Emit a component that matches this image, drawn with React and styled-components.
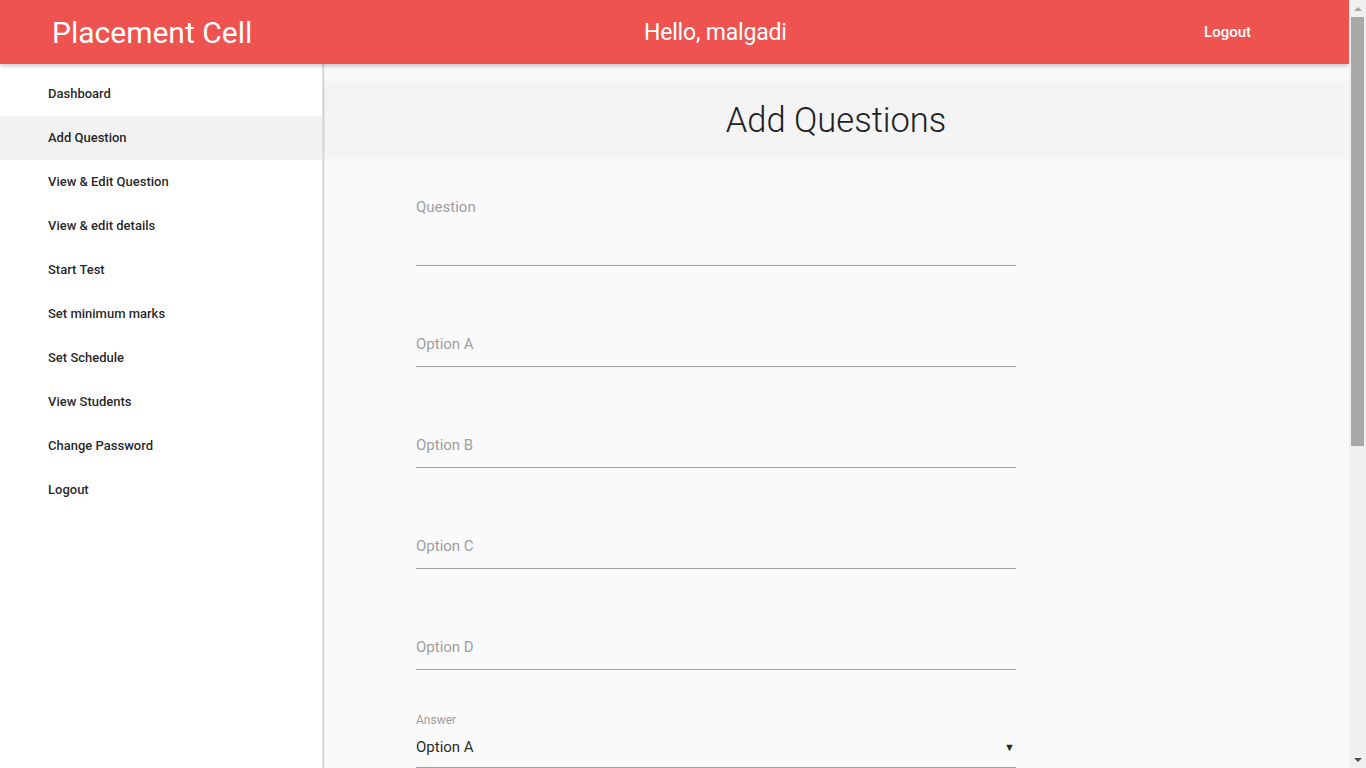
import React from "react";
import styled, { createGlobalStyle } from "styled-components";

const GlobalStyle = createGlobalStyle`
  body {
    margin: 0;
    font-family: Roboto, "Liberation Sans", sans-serif;
    background: #fafafa;
    color: rgba(0, 0, 0, 0.87);
  }
`;

const Page = styled.div`
  margin-right: 17px;
`;

const Header = styled.nav`
  position: relative;
  z-index: 2;
  display: grid;
  grid-template-columns: 592px 1fr auto;
  align-items: center;
  height: 64px;
  padding: 0 98px 0 52px;
  background: #ef5350;
  color: #fff;
  box-shadow: 0 2px 4px rgba(0, 0, 0, 0.22);
`;

const Brand = styled.div`
  font-size: 30px;
  font-weight: 400;
`;

const Greeting = styled.div`
  font-size: 23px;
  font-weight: 400;
  letter-spacing: -0.2px;
`;

const HeaderLink = styled.a`
  font-size: 15px;
  font-weight: 500;
  color: #fff;
  text-decoration: none;
`;

const Layout = styled.div`
  display: grid;
  grid-template-columns: 323px 1fr;
  min-height: calc(100vh - 64px);
`;

const Sidebar = styled.aside`
  position: relative;
  z-index: 1;
  background: #fff;
  padding-top: 8px;
  box-shadow: 1px 0 2px rgba(0, 0, 0, 0.18);
  border-right: 1px solid #e0e0e0;
`;

const NavItem = styled.a`
  display: flex;
  align-items: center;
  box-sizing: border-box;
  height: 44px;
  padding: 0 0 2px 48px;
  font-size: 13px;
  font-weight: 500;
  color: rgba(0, 0, 0, 0.87);
  text-decoration: none;
  background: ${(p) => (p.$active ? "#f2f2f2" : "transparent")};
`;

const Main = styled.main`
  padding-top: 17px;
  padding-bottom: 520px;
`;

const TitleBand = styled.div`
  display: flex;
  align-items: center;
  justify-content: center;
  height: 78px;
  background: #f4f4f4;
`;

const Title = styled.h1`
  margin: 0;
  font-size: 34.5px;
  font-weight: 300;
  color: #212121;
`;

const Form = styled.form`
  width: 600px;
  margin-left: 93px;
  padding-top: 27px;
`;

const TextArea = styled.div`
  height: 80px;
  padding-top: 11px;
  box-sizing: border-box;
  border-bottom: 1px solid #9e9e9e;
`;

const InputBox = styled.div`
  display: flex;
  align-items: center;
  height: 44px;
  margin-top: 56px;
  border-bottom: 1px solid #9e9e9e;
`;

const Label = styled.label`
  font-size: 15px;
  line-height: 20px;
  color: #9e9e9e;
`;

const SelectField = styled.div`
  margin-top: 43px;
`;

const SmallLabel = styled.label`
  display: block;
  font-size: 12px;
  line-height: 14px;
  color: #9e9e9e;
`;

const SelectBox = styled.div`
  display: flex;
  justify-content: space-between;
  align-items: center;
  height: 40px;
  font-size: 15px;
  border-bottom: 1px solid #9e9e9e;
`;

const Caret = styled.span`
  font-size: 11px;
  padding-right: 1px;
`;

const SubmitButton = styled.button`
  margin-top: 40px;
  height: 36px;
  padding: 0 16px;
  border: none;
  border-radius: 2px;
  background: #ef5350;
  color: #fff;
  font-family: inherit;
  font-size: 14px;
  font-weight: 500;
  text-transform: uppercase;
  box-shadow: 0 2px 2px rgba(0, 0, 0, 0.2);
`;

/* classic browser scrollbar, drawn over the right edge */
const ScrollRail = styled.div`
  position: fixed;
  top: 0;
  right: 0;
  z-index: 5;
  display: flex;
  flex-direction: column;
  width: 17px;
  height: 100vh;
  background: #f0f0f0;
`;

const ArrowButton = styled.div`
  display: flex;
  align-items: center;
  justify-content: center;
  height: 17px;
  flex-shrink: 0;
  &::after {
    content: "";
    border-left: 4px solid transparent;
    border-right: 4px solid transparent;
    ${(p) =>
      p.$down
        ? "border-top: 4px solid #505050;"
        : "border-bottom: 4px solid #a3a3a3;"}
  }
`;

const Thumb = styled.div`
  height: 429px;
  margin: 0 2px;
  background: #a8a8a8;
`;

const Track = styled.div`
  flex: 1;
`;

const links = [
  "Dashboard",
  "Add Question",
  "View & Edit Question",
  "View & edit details",
  "Start Test",
  "Set minimum marks",
  "Set Schedule",
  "View Students",
  "Change Password",
  "Logout",
];

const options = ["Option A", "Option B", "Option C", "Option D"];

const App = () => (
  <>
    <GlobalStyle />
    <Page>
      <Header>
        <Brand>Placement Cell</Brand>
        <Greeting>Hello, malgadi</Greeting>
        <HeaderLink href="#">Logout</HeaderLink>
      </Header>
      <Layout>
        <Sidebar>
          {links.map((l) => (
            <NavItem key={l} href="#" $active={l === "Add Question"}>
              {l}
            </NavItem>
          ))}
        </Sidebar>
        <Main>
          <TitleBand>
            <Title>Add Questions</Title>
          </TitleBand>
          <Form>
            <TextArea>
              <Label>Question</Label>
            </TextArea>
            {options.map((o) => (
              <InputBox key={o}>
                <Label>{o}</Label>
              </InputBox>
            ))}
            <SelectField>
              <SmallLabel>Answer</SmallLabel>
              <SelectBox>
                <span>Option A</span>
                <Caret>▼</Caret>
              </SelectBox>
            </SelectField>
            <SubmitButton type="button">Submit</SubmitButton>
          </Form>
        </Main>
      </Layout>
    </Page>
    <ScrollRail>
      <ArrowButton />
      <Thumb />
      <Track />
      <ArrowButton $down />
    </ScrollRail>
  </>
);

export default App;
